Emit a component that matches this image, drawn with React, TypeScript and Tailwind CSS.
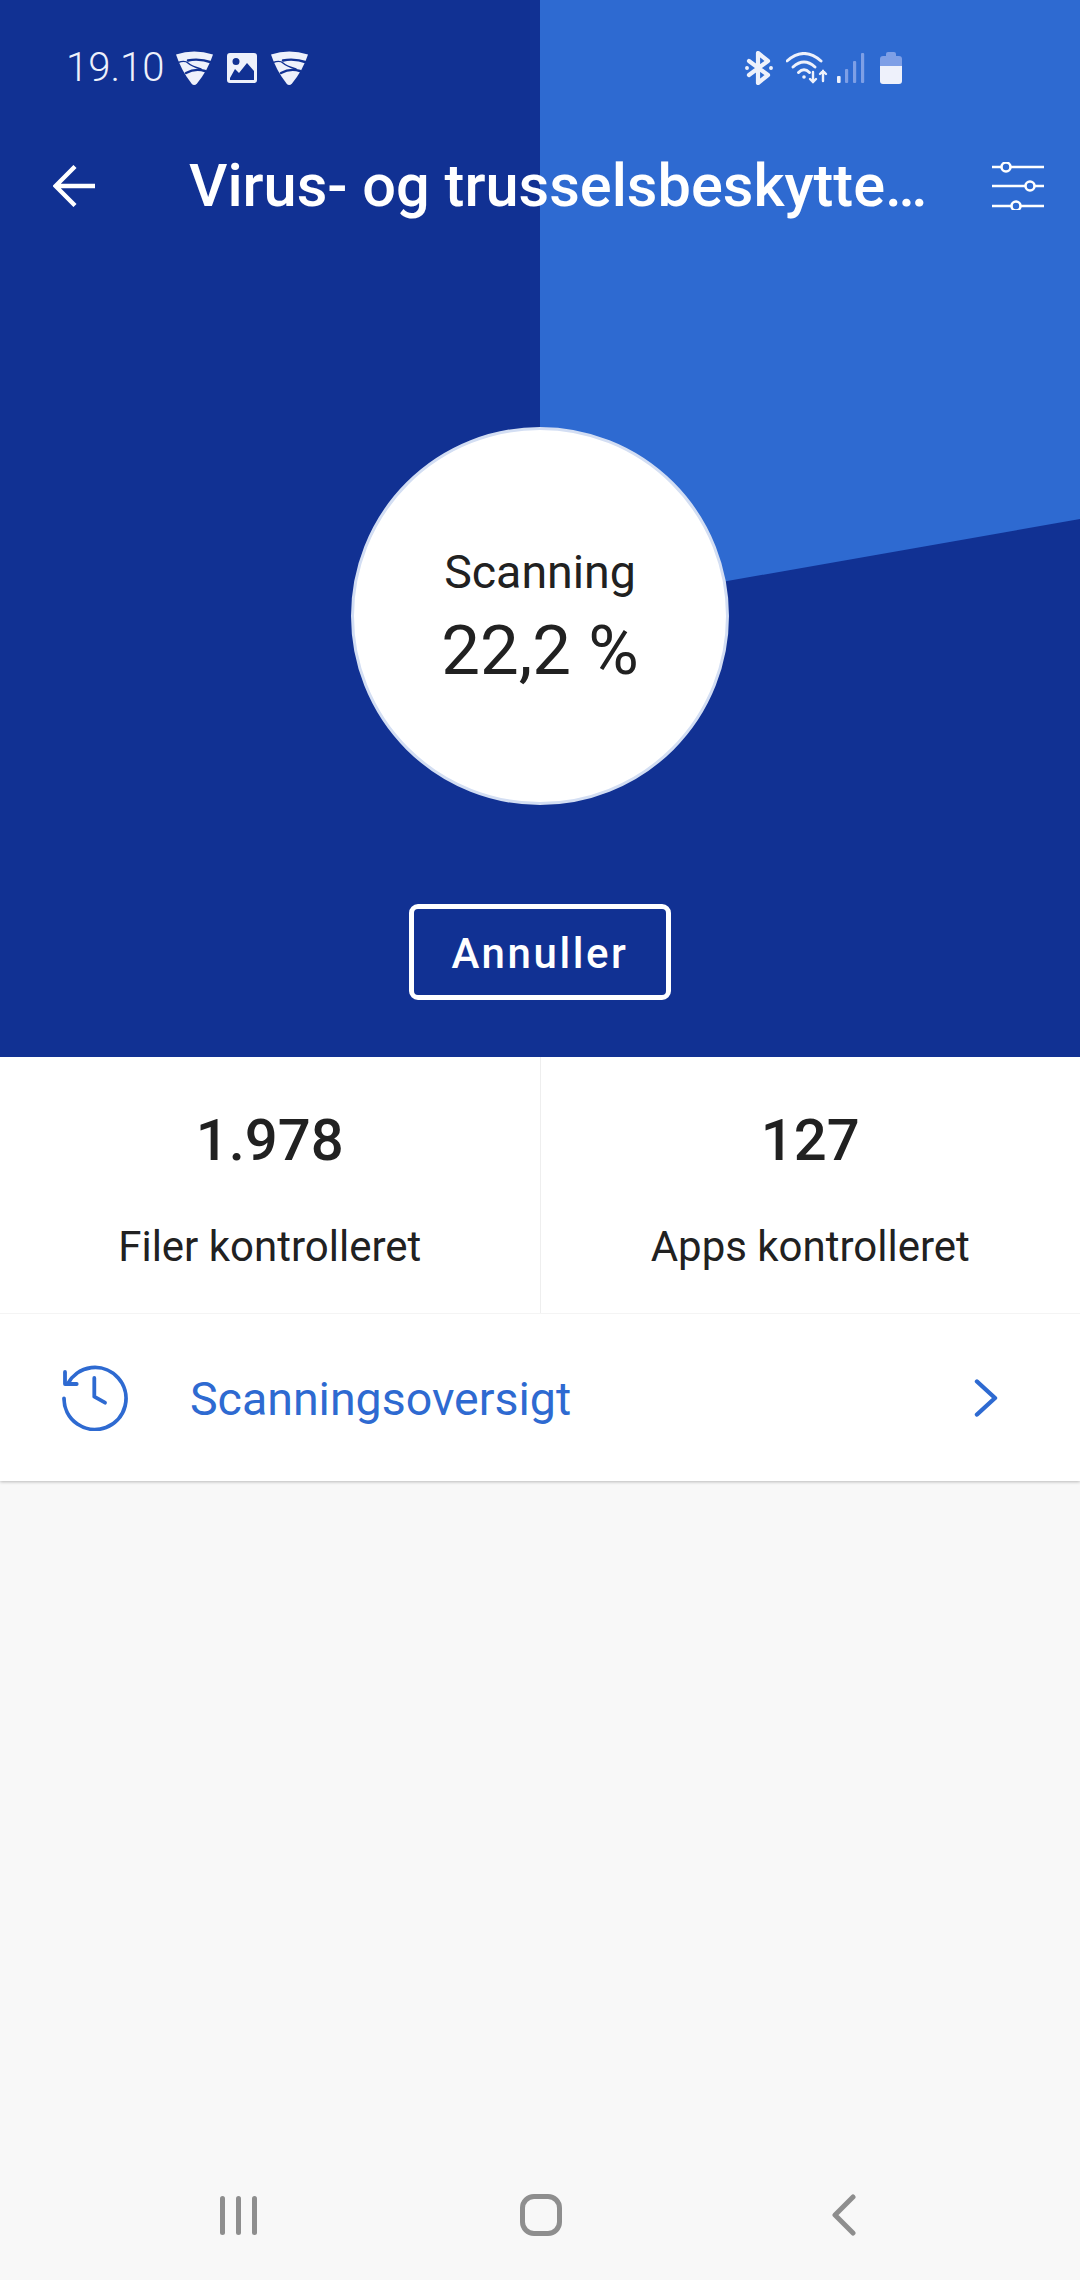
import React from "react";

const ShieldLogo = () => (
  <svg width="37" height="36" viewBox="0 0 37 36">
    <path
      fill="#eef1fb"
      d="M0 4.5Q18 -1.5 37 4.5Q32 20 21 33.5Q18 36.5 15.5 33.5Q5 20 0 4.5Z"
    />
    <g fill="none" stroke="#113193" strokeLinecap="round">
      <path d="M12 10.5Q23 8 36 12.5" strokeWidth="2.4" />
      <path d="M2 12.5Q9 10 12 13T25 19" strokeWidth="1.4" />
      <path d="M29 21Q19 18 10 23" strokeWidth="2.4" />
    </g>
  </svg>
);

const StatusBar = () => (
  <div className="flex items-center h-[136px] pl-[66px]">
    <span className="text-[40px] font-light text-[#eef1fb] leading-none w-[110px]">19.10</span>
    <ShieldLogo />
    <svg className="ml-[14px]" width="30" height="30" viewBox="0 0 30 30">
      <path
        fill="#eef1fb"
        fillRule="evenodd"
        d="M3 0H27Q30 0 30 3V27Q30 30 27 30H3Q0 30 0 27V3Q0 0 3 0ZM3 25V27H27V18L20 10L12 20L8 16ZM9 5A3.5 3.5 0 1 0 9 12A3.5 3.5 0 1 0 9 5Z"
      />
    </svg>
    <div className="ml-[14px]">
      <ShieldLogo />
    </div>
    <div className="flex items-center ml-[437px]">
      {/* bluetooth */}
      <svg width="28" height="34" viewBox="0 0 28 34" fill="none" stroke="#eef1fb" strokeWidth="4.2" strokeLinejoin="round" strokeLinecap="round">
        <path d="M4 10L23 24L13 32V2L23 10L4 24" />
        <circle cx="2" cy="17" r="1.2" fill="#eef1fb" strokeWidth="1.5" />
        <circle cx="26" cy="17" r="1.2" fill="#eef1fb" strokeWidth="1.5" />
      </svg>
      {/* wifi with arrows */}
      <svg className="ml-[13px]" width="42" height="32" viewBox="0 0 42 32" fill="none" stroke="#eef1fb" strokeWidth="3" strokeLinecap="round">
        <path d="M1 9Q18 -6 35 9" />
        <path d="M7 15Q18 5 29 15" />
        <path d="M12.5 20.5Q18 15 23.5 20.5" />
        <circle cx="18" cy="25" r="1.8" fill="#eef1fb" stroke="none" />
        <path d="M27 20V30M24 27L27 30L30 27" strokeWidth="2.4" />
        <path d="M37 29V19M34 22L37 19L40 22" strokeWidth="2.4" />
      </svg>
      {/* signal */}
      <svg className="ml-[9px]" width="28" height="30" viewBox="0 0 28 30">
        <rect x="0" y="23" width="3.6" height="7" rx="1" fill="#eef1fb" />
        <rect x="8" y="16" width="3.2" height="14" rx="1" fill="#7e9fe6" />
        <rect x="16" y="8" width="3.2" height="22" rx="1" fill="#7e9fe6" />
        <rect x="24" y="0" width="3.2" height="30" rx="1" fill="#7e9fe6" />
      </svg>
      {/* battery */}
      <div className="ml-[15px] flex flex-col items-center w-[22px]">
        <div className="w-[10px] h-[4px] rounded-t-[2px] bg-[#7e9fe6]" />
        <div className="w-[22px] h-[10px] rounded-t-[3px] bg-[#7e9fe6]" />
        <div className="w-[22px] h-[18px] rounded-b-[3px] bg-[#eef1fb]" />
      </div>
    </div>
  </div>
);

const Toolbar = () => (
  <div className="flex items-center h-[100px] pl-[53px]">
    <svg width="42" height="42" viewBox="0 0 42 42" fill="none" stroke="#fff" strokeWidth="4.4">
      <path d="M42 21H2M22 1.5L2.5 21L22 40.5" />
    </svg>
    <span className="ml-[94px] pt-[2px] w-[803px] text-[59.5px] font-medium text-white leading-none whitespace-nowrap">
      Virus- og trusselsbeskytte…
    </span>
    <svg width="52" height="48" viewBox="0 0 52 48" fill="none" stroke="#fff" strokeWidth="2.6">
      <path d="M0 5H9M19 5H52M0 24H33M43 24H52M0 44H19M29 44H52" />
      <circle cx="14" cy="5" r="4.5" />
      <circle cx="38" cy="24" r="4.5" />
      <circle cx="24" cy="44" r="4.5" />
    </svg>
  </div>
);

const Stat = ({ value, label }: { value: string; label: string }) => (
  <div className="flex-1 flex flex-col items-center">
    <div className="mt-[50px] text-[58px] leading-[66px] font-medium text-[#212121]">{value}</div>
    <div className="mt-[50px] text-[42px] leading-[48px] text-[#212121]">{label}</div>
  </div>
);

const App = () => {
  return (
    <div className="w-[1080px] h-[2280px] flex flex-col bg-[#f8f8f8] font-['Roboto',sans-serif] overflow-hidden">
      {/* header with pie progress */}
      <div className="relative h-[1057px] bg-[#113193] shrink-0">
        <div className="absolute inset-0 bg-[#2e6ad1] [clip-path:polygon(540px_0,1080px_0,1080px_519px,540px_614px)]" />
        <div className="relative flex flex-col h-full">
          <StatusBar />
          <Toolbar />
          <div className="mt-[191px] mx-auto w-[378px] h-[378px] rounded-full bg-white border-[3px] border-[#d3def3] flex flex-col items-center text-[#212121]">
            <span className="mt-[115px] text-[46.5px] leading-[54px]">Scanning</span>
            <span className="mt-[12px] text-[69px] leading-[80px]">22,2 %</span>
          </div>
          <button className="mt-[99px] mx-auto w-[262px] h-[96px] pt-[3px] rounded-[9px] border-[5px] border-white text-white text-[42px] font-medium tracking-[2.6px]">
            Annuller
          </button>
        </div>
      </div>

      <div className="bg-white shrink-0 shadow-[0_1px_3px_rgba(0,0,0,0.25)]">
        <div className="flex h-[257px] border-b border-[#f4f4f4]">
          <Stat value="1.978" label="Filer kontrolleret" />
          <div className="w-[1px] bg-[#eeeeee]" />
          <Stat value="127" label="Apps kontrolleret" />
        </div>
        <div className="flex items-center h-[167px] pl-[62px] pr-[82px] text-[#2e6ad1]">
          <svg width="66" height="66" viewBox="0 0 66 66" fill="none" stroke="#2e6ad1" strokeWidth="3.8" strokeLinecap="round" strokeLinejoin="round">
            <path d="M5.6 19A31 31 0 1 1 2 33.5" />
            <path d="M3 7V19H14.7" />
            <path d="M32.3 13V31.7L43 37.7" />
          </svg>
          <span className="ml-[62px] pt-[3px] flex-1 text-[46.5px] leading-none">Scanningsoversigt</span>
          <svg width="24" height="38" viewBox="0 0 24 38" fill="none" stroke="#2e6ad1" strokeWidth="4.4" strokeLinecap="round" strokeLinejoin="round">
            <path d="M3 2.5L21 19L3 35.5" />
          </svg>
        </div>
      </div>

      <div className="mt-auto flex items-center h-[86px] mb-[22px]">
        <div className="ml-[220px] flex gap-[11px]">
          <div className="w-[5px] h-[39px] rounded-full bg-[#8e8e8e]" />
          <div className="w-[5px] h-[39px] rounded-full bg-[#8e8e8e]" />
          <div className="w-[5px] h-[39px] rounded-full bg-[#8e8e8e]" />
        </div>
        <div className="ml-[263px] w-[42px] h-[42px] rounded-[14px] border-[5px] border-[#8e8e8e]" />
        <svg className="ml-[270px]" width="24" height="42" viewBox="0 0 24 42" fill="none" stroke="#8e8e8e" strokeWidth="5" strokeLinecap="round" strokeLinejoin="round">
          <path d="M21 3L3 21L21 39" />
        </svg>
      </div>
    </div>
  );
};

export default App;
